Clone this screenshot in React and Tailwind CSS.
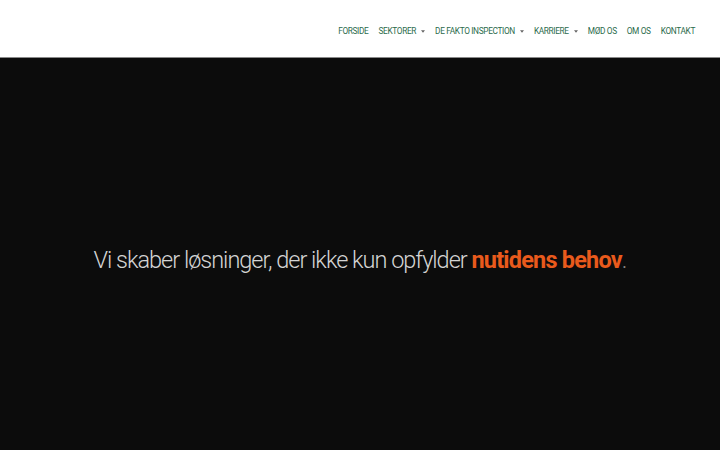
import React from 'react';

const links = [
  { label: 'FORSIDE' },
  { label: 'SEKTORER', drop: true },
  { label: 'DE FAKTO INSPECTION', drop: true },
  { label: 'KARRIERE', drop: true },
  { label: 'MØD OS' },
  { label: 'OM OS' },
  { label: 'KONTAKT' },
];

export default function App() {
  return (
    <div className="w-[720px] h-[450px] flex flex-col bg-[#0c0c0c] overflow-hidden" style={{ fontFamily: 'Roboto, "Liberation Sans", sans-serif' }}>
      <header className="h-[58px] bg-white border-b border-[#8a8a8a] flex items-center justify-end pr-[25px] pt-[6px] shrink-0">
        <nav className="flex items-center gap-[10px] text-[8.3px] text-[#2b6b4c] tracking-[-0.35px]">
          {links.map((l) => (
            <a key={l.label} className="flex items-center gap-[5px]">
              <span>{l.label}</span>
              {l.drop && (
                <svg width="4" height="3" viewBox="0 0 4 3" className="text-[#666]">
                  <path d="M0 0.3h4L2 2.7z" fill="currentColor" />
                </svg>
              )}
            </a>
          ))}
        </nav>
      </header>
      <main className="flex-1 flex items-center justify-center pt-[13px]">
        <h1 className="text-[23.5px] font-light text-[#d4d4d4] tracking-[-1px]">
          Vi skaber løsninger, der ikke kun opfylder{' '}
          <span className="font-bold text-[#e95a1c] tracking-[-0.8px]">nutidens behov</span>
          <span className="text-[#888]">.</span>
        </h1>
      </main>
    </div>
  );
}
